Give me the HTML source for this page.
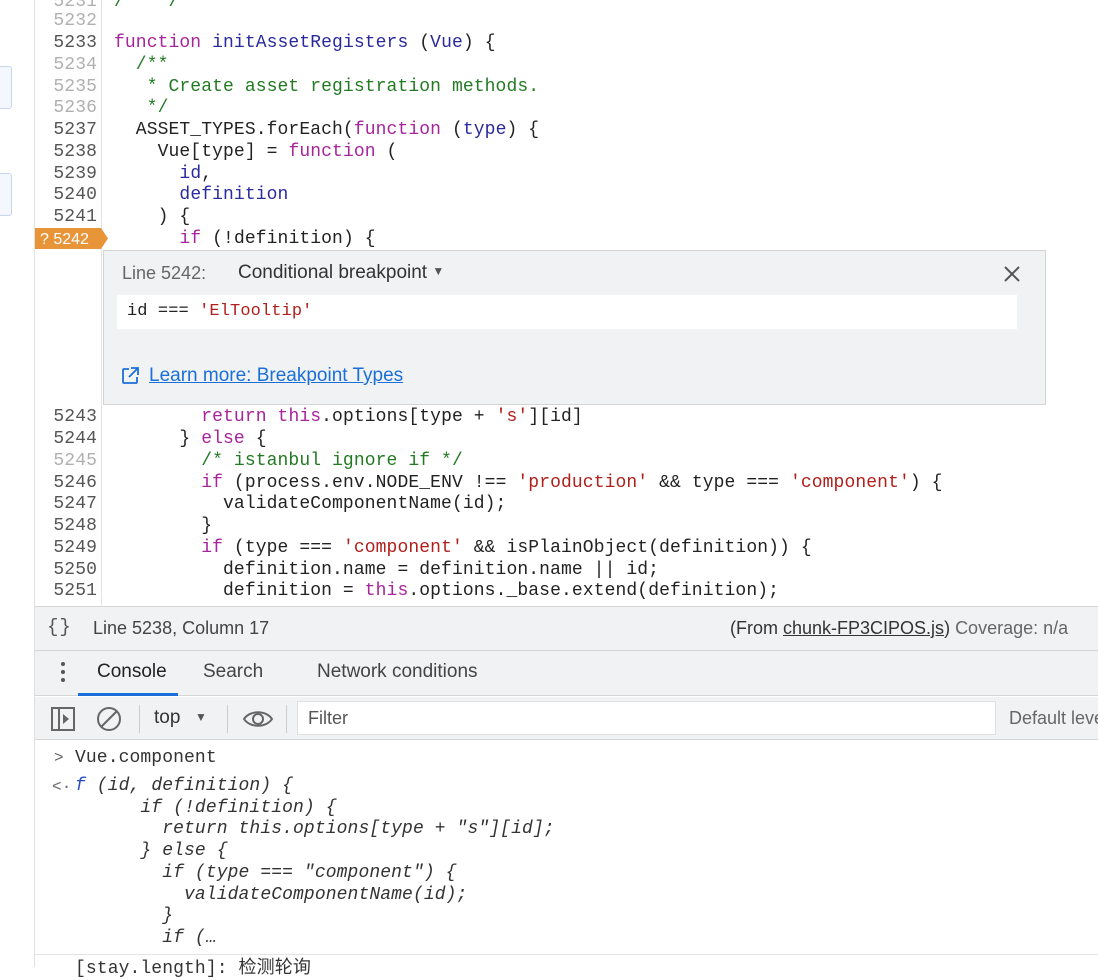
<!DOCTYPE html>
<html><head><meta charset="utf-8"><style>
*{margin:0;padding:0;box-sizing:border-box}
body{width:1098px;height:967px;overflow:hidden;background:#fff;position:relative;font-family:"Liberation Sans","Noto Sans CJK SC",sans-serif;}
.mono{font-family:"Liberation Mono","Noto Sans CJK SC",monospace;font-size:18px;letter-spacing:0.1px}
.ln{position:absolute;left:35px;width:62px;text-align:right;color:#555;height:22px;line-height:22px}
.ln.d{color:#b0b0b0}
.cl{position:absolute;left:114px;white-space:pre;height:22px;line-height:22px;color:#222}
.k{color:#a8249c}.v{color:#2a2a9e}.c{color:#237a23}.s{color:#b0201c}
.abs{position:absolute}
</style></head><body>
<div class="abs" style="left:0;top:0;width:35px;height:967px;background:#fff;border-right:1px solid #e0e0e0"></div>
<div class="abs" style="left:-4px;top:66px;width:16px;height:43px;border:1px solid #c7d6f0;border-radius:3px;background:#f4f7fd"></div>
<div class="abs" style="left:-4px;top:173px;width:16px;height:43px;border:1px solid #c7d6f0;border-radius:3px;background:#f4f7fd"></div>
<div class="abs" style="left:101px;top:0;width:1px;height:606px;background:#e2e2e2"></div>

<div class="mono">
<div class="ln d" style="top:-9px">5231</div><div class="cl c" style="top:-9px">/*  */</div>
<div class="ln d" style="top:10px">5232</div>
<div class="ln" style="top:32px">5233</div><div class="cl" style="top:32px"><span class="k">function</span> <span class="v">initAssetRegisters</span> (<span class="v">Vue</span>) {</div>
<div class="ln d" style="top:54px">5234</div><div class="cl c" style="top:54px">  /**</div>
<div class="ln d" style="top:76px">5235</div><div class="cl c" style="top:76px">   * Create asset registration methods.</div>
<div class="ln d" style="top:97px">5236</div><div class="cl c" style="top:97px">   */</div>
<div class="ln" style="top:119px">5237</div><div class="cl" style="top:119px">  ASSET_TYPES.forEach(<span class="k">function</span> (<span class="v">type</span>) {</div>
<div class="ln" style="top:141px">5238</div><div class="cl" style="top:141px">    Vue[type] = <span class="k">function</span> (</div>
<div class="ln" style="top:163px">5239</div><div class="cl" style="top:163px">      <span class="v">id</span>,</div>
<div class="ln" style="top:184px">5240</div><div class="cl" style="top:184px">      <span class="v">definition</span></div>
<div class="ln" style="top:206px">5241</div><div class="cl" style="top:206px">    ) {</div>
<div class="cl" style="top:228px">      <span class="k">if</span> (!definition) {</div>

<div class="ln" style="top:406px">5243</div><div class="cl" style="top:406px">        <span class="k">return</span> <span class="k">this</span>.options[type + <span class="s">'s'</span>][id]</div>
<div class="ln" style="top:428px">5244</div><div class="cl" style="top:428px">      } <span class="k">else</span> {</div>
<div class="ln d" style="top:450px">5245</div><div class="cl c" style="top:450px">        /* istanbul ignore if */</div>
<div class="ln" style="top:472px">5246</div><div class="cl" style="top:472px">        <span class="k">if</span> (process.env.NODE_ENV !== <span class="s">'production'</span> &amp;&amp; type === <span class="s">'component'</span>) {</div>
<div class="ln" style="top:493px">5247</div><div class="cl" style="top:493px">          validateComponentName(id);</div>
<div class="ln" style="top:515px">5248</div><div class="cl" style="top:515px">        }</div>
<div class="ln" style="top:537px">5249</div><div class="cl" style="top:537px">        <span class="k">if</span> (type === <span class="s">'component'</span> &amp;&amp; isPlainObject(definition)) {</div>
<div class="ln" style="top:559px">5250</div><div class="cl" style="top:559px">          definition.name = definition.name || id;</div>
<div class="ln" style="top:580px">5251</div><div class="cl" style="top:580px">          definition = <span class="k">this</span>.options._base.extend(definition);</div>
</div>
<svg class="abs" style="left:35px;top:228px" width="74" height="21"><path d="M0 0H66L73 10.5L66 21H0Z" fill="#e8953a"/><text x="5" y="16" fill="#fff" font-family="Liberation Sans,sans-serif" font-size="16">? 5242</text></svg>

<div class="abs" style="left:103px;top:250px;width:943px;height:155px;background:#f1f2f3;border:1px solid #d4d4d4">
 <div class="abs" style="left:18px;top:12px;font-size:18px;color:#666">Line 5242:</div>
 <div class="abs" style="left:134px;top:11px;font-size:19px;color:#333">Conditional breakpoint <span style="font-size:12px;vertical-align:3px;color:#555">▼</span></div>
 <svg class="abs" style="left:899px;top:14px" width="18" height="18"><path d="M2 2L16 16M16 2L2 16" stroke="#555" stroke-width="2"/></svg>
 <div class="abs mono" style="left:13px;top:44px;width:900px;height:34px;background:#fff;padding:6px 10px;font-size:17px;line-height:22px;color:#222">id === <span class="s">'ElTooltip'</span></div>
 <svg class="abs" style="left:16px;top:115px" width="20" height="20"><path d="M9 3H4a1 1 0 0 0-1 1v12a1 1 0 0 0 1 1h12a1 1 0 0 0 1-1v-5M11 2h7v7M18 2L9 11" stroke="#1a6fd8" stroke-width="1.8" fill="none"/></svg>
 <div class="abs" style="left:45px;top:114px;font-size:19px;color:#1a6fd8;text-decoration:underline">Learn more: Breakpoint Types</div>
</div>

<div class="abs" style="left:35px;top:606px;width:1063px;height:45px;background:#f1f2f3;border-top:1px solid #d6d6d6;border-bottom:1px solid #d6d6d6"></div>
<div class="abs mono" style="left:47px;top:616px;font-size:19px;color:#555;letter-spacing:1px">{}</div>
<div class="abs" style="left:93px;top:618px;font-size:18px;color:#444">Line 5238, Column 17</div>
<div class="abs" style="left:730px;top:618px;font-size:18px;color:#333;white-space:nowrap">(From <span style="text-decoration:underline">chunk-FP3CIPOS.js</span>) <span style="color:#666">Coverage: n/a</span></div>

<div class="abs" style="left:35px;top:651px;width:1063px;height:45px;background:#f1f2f3;border-bottom:1px solid #d6d6d6"></div>
<div class="abs" style="left:61px;top:662px;width:4px;height:4px;border-radius:2px;background:#555;box-shadow:0 8px 0 #555,0 16px 0 #555"></div>
<div class="abs" style="left:97px;top:661px;font-size:19px;color:#222">Console</div>
<div class="abs" style="left:78px;top:693px;width:100px;height:3px;background:#1a6fd8"></div>
<div class="abs" style="left:203px;top:661px;font-size:19px;color:#444">Search</div>
<div class="abs" style="left:317px;top:661px;font-size:19px;color:#444">Network conditions</div>

<div class="abs" style="left:35px;top:697px;width:1063px;height:43px;background:#f1f2f3;border-bottom:1px solid #d6d6d6"></div>
<svg class="abs" style="left:50px;top:706px" width="26" height="26"><rect x="2" y="2" width="22" height="22" fill="none" stroke="#666" stroke-width="2"/><path d="M9 2V24" stroke="#666" stroke-width="2"/><path d="M13 8L19 13L13 18Z" fill="#666"/></svg>
<svg class="abs" style="left:95px;top:705px" width="28" height="28"><circle cx="14" cy="14" r="11" fill="none" stroke="#666" stroke-width="2"/><path d="M6 22L22 6" stroke="#666" stroke-width="2"/></svg>
<div class="abs" style="left:139px;top:705px;width:1px;height:28px;background:#ccc"></div>
<div class="abs" style="left:154px;top:707px;font-size:19px;color:#333">top</div>
<div class="abs" style="left:195px;top:710px;font-size:12px;color:#555">▼</div>
<div class="abs" style="left:227px;top:705px;width:1px;height:28px;background:#ccc"></div>
<svg class="abs" style="left:242px;top:707px" width="32" height="24"><path d="M2 12C8 3 24 3 30 12C24 21 8 21 2 12Z" fill="none" stroke="#666" stroke-width="2"/><circle cx="16" cy="12" r="5" fill="none" stroke="#666" stroke-width="2"/></svg>
<div class="abs" style="left:286px;top:705px;width:1px;height:28px;background:#ccc"></div>
<div class="abs" style="left:297px;top:701px;width:699px;height:34px;background:#fff;border:1px solid #e0e0e0"></div>
<div class="abs" style="left:308px;top:708px;font-size:18px;color:#555">Filter</div>
<div class="abs" style="left:1009px;top:708px;font-size:18px;color:#666;white-space:nowrap">Default levels</div>

<div class="mono" style="color:#333">
<div class="abs" style="left:54px;top:747px;line-height:22px;color:#666;font-size:16px">&gt;</div>
<div class="abs" style="left:75px;top:747px;line-height:22px">Vue.component</div>
<div class="abs" style="left:52px;top:776px;line-height:22px;color:#666;font-size:16px">&lt;·</div>
<div class="abs" style="left:75px;top:776px;line-height:21.7px;white-space:pre;font-style:italic"><span style="color:#2a4ec0">f</span> (id, definition) {
      if (!definition) {
        return this.options[type + "s"][id];
      } else {
        if (type === "component") {
          validateComponentName(id);
        }
        if (…</div>
<div class="abs" style="left:35px;top:954px;width:1063px;height:1px;background:#e4e4e4"></div>
<div class="abs" style="left:75px;top:958px;line-height:22px;white-space:pre">[stay.length]: 检测轮询</div>
</div>
</body></html>
